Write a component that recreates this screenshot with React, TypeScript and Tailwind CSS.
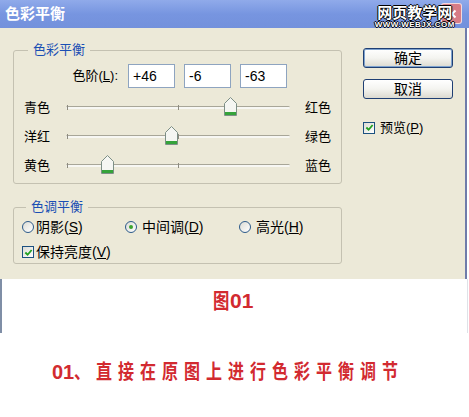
import React from 'react';

type Slider = { left: string; right: string; value: number };

const SLIDERS: Slider[] = [
  { left: '青色', right: '红色', value: 46 },
  { left: '洋红', right: '绿色', value: -6 },
  { left: '黄色', right: '蓝色', value: -63 },
];

const TRACK_WIDTH = 224;

const CheckMark = () => (
  <span className="w-[12px] h-[12px] shrink-0 border border-[#1c5180] bg-gradient-to-br from-[#dcdcd5] to-white flex items-center justify-center">
    <svg viewBox="0 0 10 10" className="w-[9px] h-[9px]">
      <path d="M1.5 5 L4 7.5 L8.5 2.2" stroke="#21a121" strokeWidth="2" fill="none" />
    </svg>
  </span>
);

const Radio = ({ checked }: { checked?: boolean }) => (
  <span className="w-[12px] h-[12px] shrink-0 rounded-full border border-[#2c5a8a] bg-gradient-to-br from-[#dcdcd5] to-white flex items-center justify-center">
    {checked && <span className="w-[4px] h-[4px] rounded-full bg-[#3aa32c]" />}
  </span>
);

const Thumb = () => (
  <svg width="13" height="19" viewBox="0 0 13 19">
    <path d="M0.5 6.5 L6.5 0.5 L12.5 6.5 V18.5 H0.5 Z" fill="#f5f6f2" stroke="#7d8f86" />
    <rect x="1" y="15" width="11" height="3" fill="#35a33a" />
  </svg>
);

const XpButton = ({ label, primary }: { label: string; primary?: boolean }) => (
  <div
    className={`w-[90px] h-[20px] rounded-[3px] border border-[#1f3f73] bg-gradient-to-b from-white via-[#f4f4f0] to-[#dcdad0] flex items-center justify-center text-[14px] text-black ${
      primary ? 'shadow-[inset_0_0_0_1px_#7da2ce]' : ''
    }`}
  >
    {label}
  </div>
);

const renderSlider = (s: Slider) => {
  const pos = ((s.value + 100) / 200) * TRACK_WIDTH;
  return (
    <div key={s.left} className="h-[29px] flex items-center">
      <span className="w-[42px] text-[13px]">{s.left}</span>
      <div className="relative w-[224px] h-[3px] rounded-full bg-[#f7f7f3] border-t border-[#a8a698]">
        <span className="absolute left-[1px] top-[-2px] w-[1px] h-[5px] bg-[#8d8b80]" />
        <span className="absolute left-[112px] top-[-2px] w-[1px] h-[5px] bg-[#8d8b80]" />
        <span className="absolute top-[-10px]" style={{ left: pos - 6 }}>
          <Thumb />
        </span>
      </div>
      <span className="ml-[15px] text-[13px]">{s.right}</span>
    </div>
  );
};

export default function App() {
  return (
    <div className="w-[469px] h-[417px] bg-white overflow-hidden font-['Liberation_Sans','Noto_Sans_CJK_SC',sans-serif] text-black">
      {/* title bar */}
      <div className="relative h-[28px] w-[469px] bg-gradient-to-b from-[#90aaea] via-[#7795e0] to-[#7391dc] flex items-center pl-[5px]">
        <span className="text-white font-bold text-[15px]">色彩平衡</span>
        <span className="absolute right-[7px] top-[3px] w-[21px] h-[21px] rounded-[3px] bg-[#d77c86] border border-white/70 flex items-center justify-center">
          <svg viewBox="0 0 10 10" className="w-[10px] h-[10px]">
            <path d="M1.5 1.5 L8.5 8.5 M8.5 1.5 L1.5 8.5" stroke="white" strokeWidth="2" />
          </svg>
        </span>
        <div className="absolute right-[14px] top-[5px] flex flex-col items-center leading-none">
          <span className="text-white text-[15px] font-bold [text-shadow:_1px_0_0_#000,_-1px_0_0_#000,_0_1px_0_#000,_0_-1px_0_#000]">
            网页教学网
          </span>
          <span className="mt-[1px] text-white text-[8px] font-bold tracking-[0.5px] [text-shadow:_1px_0_0_#000,_-1px_0_0_#000,_0_1px_0_#000,_0_-1px_0_#000]">
            WWW.WEBJX.COM
          </span>
        </div>
      </div>

      {/* dialog body */}
      <div className="w-[467px] h-[251px] bg-[#ece9d8] border-r-2 border-[#6f7caa] flex">
        <div className="pl-[13px] pt-[14px] flex flex-col">
          <fieldset className="w-[329px] border border-[#c4c1b1] rounded-[3px] px-[10px] pb-[3px]">
            <legend className="ml-[4px] px-[5px] text-[13px] leading-[16px] text-[#1a4fb4]">色彩平衡</legend>
            <div className="mt-[6px] flex items-center">
              <span className="w-[94px] text-right text-[13px]">
                色阶(<span className="underline">L</span>):
              </span>
              <div className="ml-[10px] flex gap-[9px]">
                {['+46', '-6', '-63'].map((v) => (
                  <div
                    key={v}
                    className="w-[47px] h-[24px] bg-white border border-[#8ea4c0] flex items-center pl-[4px] text-[14px]"
                  >
                    {v}
                  </div>
                ))}
              </div>
            </div>
            <div className="mt-[5px] flex flex-col">{SLIDERS.map(renderSlider)}</div>
          </fieldset>

          <fieldset className="mt-[15px] w-[329px] border border-[#c4c1b1] rounded-[3px] pl-[8px] pb-[3px]">
            <legend className="ml-[4px] px-[5px] text-[13px] leading-[16px] text-[#1a4fb4]">色调平衡</legend>
            <div className="mt-[4px] h-[16px] flex items-center text-[14px]">
              <div className="w-[103px] flex items-center gap-[2px]">
                <Radio />
                <span>
                  阴影(<span className="underline">S</span>)
                </span>
              </div>
              <div className="w-[114px] flex items-center gap-[5px]">
                <Radio checked />
                <span>
                  中间调(<span className="underline">D</span>)
                </span>
              </div>
              <div className="flex items-center gap-[5px]">
                <Radio />
                <span>
                  高光(<span className="underline">H</span>)
                </span>
              </div>
            </div>
            <div className="mt-[9px] h-[16px] flex items-center gap-[2px] text-[14px]">
              <CheckMark />
              <span>
                保持亮度(<span className="underline">V</span>)
              </span>
            </div>
          </fieldset>
        </div>

        <div className="ml-[21px] pt-[20px] flex flex-col">
          <XpButton label="确定" primary />
          <div className="mt-[11px]">
            <XpButton label="取消" />
          </div>
          <div className="mt-[19px] flex items-center gap-[5px] text-[13px]">
            <CheckMark />
            <span>
              预览(<span className="underline">P</span>)
            </span>
          </div>
        </div>
      </div>

      {/* caption area */}
      <div className="h-[54px] w-[468px] border-l-2 border-r border-l-[#7f8ea6] border-r-[#dfe2e8] pl-[211px] pt-[11px] text-[#d22a30]">
        <div className="flex items-end leading-[22px]">
          <span className="inline-block w-[17px] text-[21px] font-semibold scale-x-[0.78] origin-left">图</span>
          <span className="text-[21px] font-semibold">01</span>
        </div>
      </div>
      <div className="pt-[28px] pl-[52px] flex items-center text-[#d22a30] leading-[22px]">
        <span className="text-[20px] font-semibold">01</span>
        <span className="inline-block text-[20px] font-semibold scale-x-[0.8] origin-left tracking-[7.5px] whitespace-nowrap">
          、直接在原图上进行色彩平衡调节
        </span>
      </div>
    </div>
  );
}
